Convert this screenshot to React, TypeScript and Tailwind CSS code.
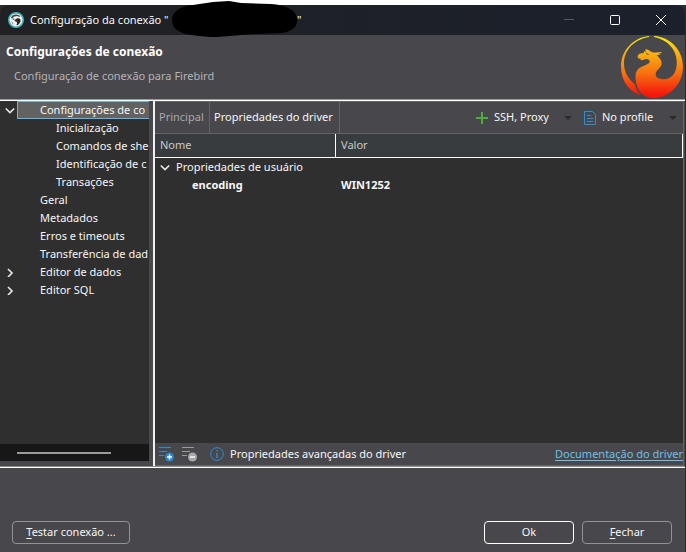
import { useState } from "react";
import type { ReactNode } from "react";

type TreeItem = {
  label: string;
  level: 0 | 1;
  state?: "open" | "closed";
};

const items: TreeItem[] = [
  { label: "Configurações de co", level: 0, state: "open" },
  { label: "Inicialização", level: 1 },
  { label: "Comandos de she", level: 1 },
  { label: "Identificação de c", level: 1 },
  { label: "Transações", level: 1 },
  { label: "Geral", level: 0 },
  { label: "Metadados", level: 0 },
  { label: "Erros e timeouts", level: 0 },
  { label: "Transferência de dad", level: 0 },
  { label: "Editor de dados", level: 0, state: "closed" },
  { label: "Editor SQL", level: 0, state: "closed" },
];

function Chevron({ open }: { open: boolean }) {
  return (
    <svg width="10" height="10" viewBox="0 0 10 10" fill="none" stroke="#e4e4e4" strokeWidth="1.7" aria-hidden="true">
      <path d={open ? "M.8 3.500l4.200 4 4.200-4" : "M3 2l4 4-4 4"} />
    </svg>
  );
}

function Caret() {
  return (
    <svg width="8" height="4" viewBox="0 0 8 4" aria-hidden="true">
      <path d="M0 0h8L4 4z" fill="#2a2a2c" />
    </svg>
  );
}

function AppIcon() {
  return (
    <svg width="16" height="16" viewBox="0 0 16 16" aria-hidden="true">
      <circle cx="8" cy="8" r="7.2" fill="#f0f0ee" stroke="#3fb3c0" strokeWidth="1.6" />
      <path d="M3 6C3.600 3.800 5.500 2.500 8 2.600c1.800 0 3.400.8 4.400 2.300l-1.800-.5-2.200-.4-2.600.8L4.200 6.800z" fill="#4a413d" />
      <path d="M9 6.600c1.200-.6 2.600-.2 3.400.9l.2 1.700-1.400 2.600-1.600 1.400-1.200-.2.800-1.800-.8-1.600-1.500-.4-.4-1.200z" fill="#2b2523" />
      <path d="M4.800 7.200h1.400" stroke="#2b2523" strokeWidth="1" />
      <path d="M3.600 9.600l1.600 2.600" stroke="#8a807a" strokeWidth=".9" fill="none" />
    </svg>
  );
}

function FirebirdLogo() {
  return (
    <svg width="62" height="62" viewBox="34 24 186 186" role="img" aria-label="Firebird">
      <defs>
        <linearGradient id="flame" x1="0" y1="24" x2="0" y2="210" gradientUnits="userSpaceOnUse">
          <stop offset="0" stopColor="#f7ee10" />
          <stop offset="0.3" stopColor="#f9ac12" />
          <stop offset="0.6" stopColor="#f77010" />
          <stop offset="0.95" stopColor="#f5160c" />
        </linearGradient>
      </defs>
      <g fill="url(#flame)">
        <path d="M118 24C70 29 34 68 34 116c0 40 22 72 59 87-9-12-15-22-18-34C55 151 44 132 43 108 42 66 74 34 118 27z" />
        <path d="M133 24C182 27 220 66 220 116C220 168 179 210 129 210C101 208 83 190 79 163C75 137 79 126 93 118C104 112 118 108 120 102C121 96 116 93 109 93C105 93 101 97 96 97C92 97 92 95 94 92C87 94 83 90 84 85C85 78 93 75 102 75L103 70L109 71L107 64C114 64 119 68 124 71C133 75 144 73 157 72C155 75 152 77 147 77L152 81H141C150 90 157 98 156 108C154 121 138 126 138 139C138 152 153 155 169 153C193 148 203 126 201 98C199 63 173 35 133 27Z" />
      </g>
      <path d="M108 76q7-2 10 4-7 1-10-4" fill="#48474b" />
    </svg>
  );
}

function ListIcon({ kind }: { kind: "add" | "remove" }) {
  const line = kind === "add" ? "#3b87be" : "#9a9a9a";
  const disc = kind === "add" ? "#2d84c6" : "#a8a8a8";
  return (
    <svg width="16" height="16" viewBox="0 0 16 16" fill="none" aria-hidden="true">
      <path d="M0 1.500h12M0 5.500h8M0 9.500h5" stroke={line} />
      <circle cx="10.500" cy="11" r="4.500" fill={disc} />
      <path d={kind === "add" ? "M8 11h5M10.500 8.500v5" : "M8 11h5"} stroke="#fff" strokeWidth="1.400" />
    </svg>
  );
}

function DialogButton({ children, primary, wide }: { children: ReactNode; primary?: boolean; wide?: boolean }) {
  return (
    <button
      type="button"
      className={`flex h-[23px] items-center justify-center rounded border ${primary ? "border-white" : "border-[#939395]"} ${wide ? "w-[118px]" : "w-[90px]"}`}
    >
      <span>{children}</span>
    </button>
  );
}

export default function App() {
  const [selected, setSelected] = useState(0);
  const [tab, setTab] = useState(1);

  return (
    <div className="min-h-screen bg-[#2b2b2c] font-['Noto_Sans',sans-serif] text-[11px] text-[#f6f6f6]">
      <div className="h-[5px] bg-white" />
      <div className="mr-px flex min-h-[calc(100vh-5px)] flex-col rounded-t-lg bg-[#48474b]">
        <header className="relative flex h-[30px] items-center justify-between rounded-t-lg bg-linear-to-r from-[#202122] to-[#1b202c] pr-px pl-2">
          <div className="flex items-center gap-1.5">
            <AppIcon />
            <h1 className="flex whitespace-pre">
              <span className="w-[267px]">Configuração da conexão "</span>
              <span>"</span>
            </h1>
          </div>
          <svg className="absolute -top-1 left-[171px]" width="127" height="37" viewBox="0 0 127 37" aria-hidden="true">
            <path
              d="M1 19C1 11 9 5 22 4L42 1 58 0l12 2 30 1c15 1 25 6 26 14 1 8-4 13-15 15l-25 1c-17 1-25 2-39 3-17 0-24-2-32-3C7 31 1 27 1 19z"
              fill="#000"
            />
          </svg>
          <div className="flex h-full">
            <button type="button" aria-label="Minimizar" className="flex w-[46px] items-center justify-center">
              <svg width="10" height="10" viewBox="0 0 10 10" stroke="#55585e">
                <path d="M0 4.500h10" />
              </svg>
            </button>
            <button type="button" aria-label="Maximizar" className="flex w-[46px] items-center justify-center">
              <svg width="10" height="10" viewBox="0 0 10 10" fill="none" stroke="#fff">
                <rect x=".5" y=".5" width="9" height="9" rx="1" />
              </svg>
            </button>
            <button type="button" aria-label="Fechar janela" className="flex w-[46px] items-center justify-center">
              <svg width="10" height="10" viewBox="0 0 10 10" stroke="#fff">
                <path d="M0 0l10 10M10 0L0 10" />
              </svg>
            </button>
          </div>
        </header>

        <section className="flex h-[65px] justify-between border-b border-[#9a9a9a] pl-1.5">
          <div className="pt-2">
            <h2 className="text-xs leading-[18px] font-bold text-white">Configurações de conexão</h2>
            <p className="pt-1.5 pl-2 leading-[18px] text-[#b4b4b6]">Configuração de conexão para Firebird</p>
          </div>
          <div className="pt-px pr-0.5">
            <FirebirdLogo />
          </div>
        </section>

        <main className="flex h-[367px] border-t border-b border-t-white border-b-[#8c8c8c]">
          <nav className="flex w-[149px] shrink-0 flex-col bg-[#2f2f2f]">
            <ul className="grow overflow-hidden">
              {items.map((item, i) => (
                <li key={item.label} className="flex h-[18px]">
                  <span className="flex w-[17px] shrink-0 items-center justify-center pl-0.5">
                    {item.state && <Chevron open={item.state === "open"} />}
                  </span>
                  <button
                    type="button"
                    onClick={() => setSelected(i)}
                    className={`grow border border-r-0 text-left leading-4 whitespace-nowrap ${item.level ? "pl-[38px]" : "pl-[22px]"} ${i === selected ? "border-[#5cb8ea] bg-[#626262]" : "border-transparent"}`}
                  >
                    {item.label}
                  </button>
                </li>
              ))}
            </ul>
            <div className="flex h-[17px] items-center bg-[#171717] pl-[17px]">
              <div className="h-0.5 w-[94px] bg-[#9b9b9b]" />
            </div>
            <div className="h-[5px] bg-[#48474b]" />
          </nav>
          <div className="w-1.5 shrink-0 border-r-2 border-[#f0f0f0] bg-[#48474b]" />

          <section className="mr-px flex min-w-0 grow flex-col border-t border-r border-b border-[#646466]">
            <div className="flex h-8 shrink-0 border-b border-[#646466]">
              <div role="tablist" className="flex">
                {["Principal", "Propriedades do driver"].map((name, i) => (
                  <button
                    key={name}
                    type="button"
                    role="tab"
                    aria-selected={tab === i}
                    onClick={() => setTab(i)}
                    className={`border-r border-[#646466] text-left whitespace-nowrap ${i ? "w-[130px] pl-1" : "w-[55px] pl-1"} ${tab === i ? "text-[#f6f6f6]" : "text-[#a9a9ab]"}`}
                  >
                    {name}
                  </button>
                ))}
              </div>
              <div className="ml-auto flex items-center pr-1.5 whitespace-nowrap">
                <button type="button" className="flex items-center gap-1.5">
                  <svg width="12" height="12" viewBox="0 0 12 12" stroke="#4caf3c" strokeWidth="2" aria-hidden="true">
                    <path d="M0 6h12M6 0v12" />
                  </svg>
                  <span className="w-[70px] text-left">SSH, Proxy</span>
                </button>
                <button type="button" aria-label="Opções de rede" className="flex w-5 justify-start pt-px">
                  <Caret />
                </button>
                <button type="button" className="flex items-center gap-1.5">
                  <svg width="12" height="14" viewBox="0 0 12 14" fill="none" stroke="#2f8fd0" aria-hidden="true">
                    <path d="M.5.5h8l3 3v10H.5zM3 4.500h4M3 7.500h6M3 10.500h6" />
                  </svg>
                  <span className="w-[67px] text-left">No profile</span>
                </button>
                <button type="button" aria-label="Opções de perfil" className="flex pt-px">
                  <Caret />
                </button>
              </div>
            </div>

            <div className="grow bg-[#2f2f2f]">
              <table className="w-full table-fixed border-separate border-spacing-0">
                <colgroup>
                  <col className="w-[181px]" />
                  <col />
                </colgroup>
                <thead className="bg-[#383c3e] text-left text-[#c9c9c9]">
                  <tr className="h-6">
                    <th scope="col" className="border-r border-b border-white p-0 pl-[5px] font-normal">Nome</th>
                    <th scope="col" className="border-r border-b border-white p-0 pl-[5px] font-normal">Valor</th>
                  </tr>
                </thead>
                <tbody>
                  <tr className="h-[18px]">
                    <td colSpan={2} className="p-0">
                      <div className="flex items-center gap-1.5 pl-[5px]">
                        <Chevron open />
                        <span>Propriedades de usuário</span>
                      </div>
                    </td>
                  </tr>
                  <tr className="h-[18px] font-bold">
                    <td className="p-0 pl-[37px]">encoding</td>
                    <td className="p-0 pl-[5px]">WIN1252</td>
                  </tr>
                </tbody>
              </table>
            </div>

            <div className="flex h-[22px] shrink-0 items-center pl-1">
              <button type="button" aria-label="Adicionar propriedade" className="w-[23px]">
                <ListIcon kind="add" />
              </button>
              <button type="button" aria-label="Remover propriedade" className="w-7">
                <ListIcon kind="remove" />
              </button>
              <svg width="14" height="14" viewBox="0 0 14 14" fill="none" stroke="#2f8fd0" aria-hidden="true">
                <circle cx="7" cy="7" r="6.300" />
                <path d="M7 6v5M7 3v1.500" strokeWidth="1.300" />
              </svg>
              <span className="pl-1.5">Propriedades avançadas do driver</span>
              <a href="#doc" className="ml-auto text-[#6cc0ea] underline underline-offset-2">
                Documentação do driver
              </a>
            </div>
          </section>
        </main>

        <footer className="flex grow items-end justify-between border-t border-white pr-[13px] pb-2 pl-3">
          <DialogButton wide>
            <u className="underline-offset-2">T</u>estar conexão ...
          </DialogButton>
          <div className="flex gap-2">
            <DialogButton primary>Ok</DialogButton>
            <DialogButton>
              <u className="underline-offset-2">F</u>echar
            </DialogButton>
          </div>
        </footer>
      </div>
    </div>
  );
}
